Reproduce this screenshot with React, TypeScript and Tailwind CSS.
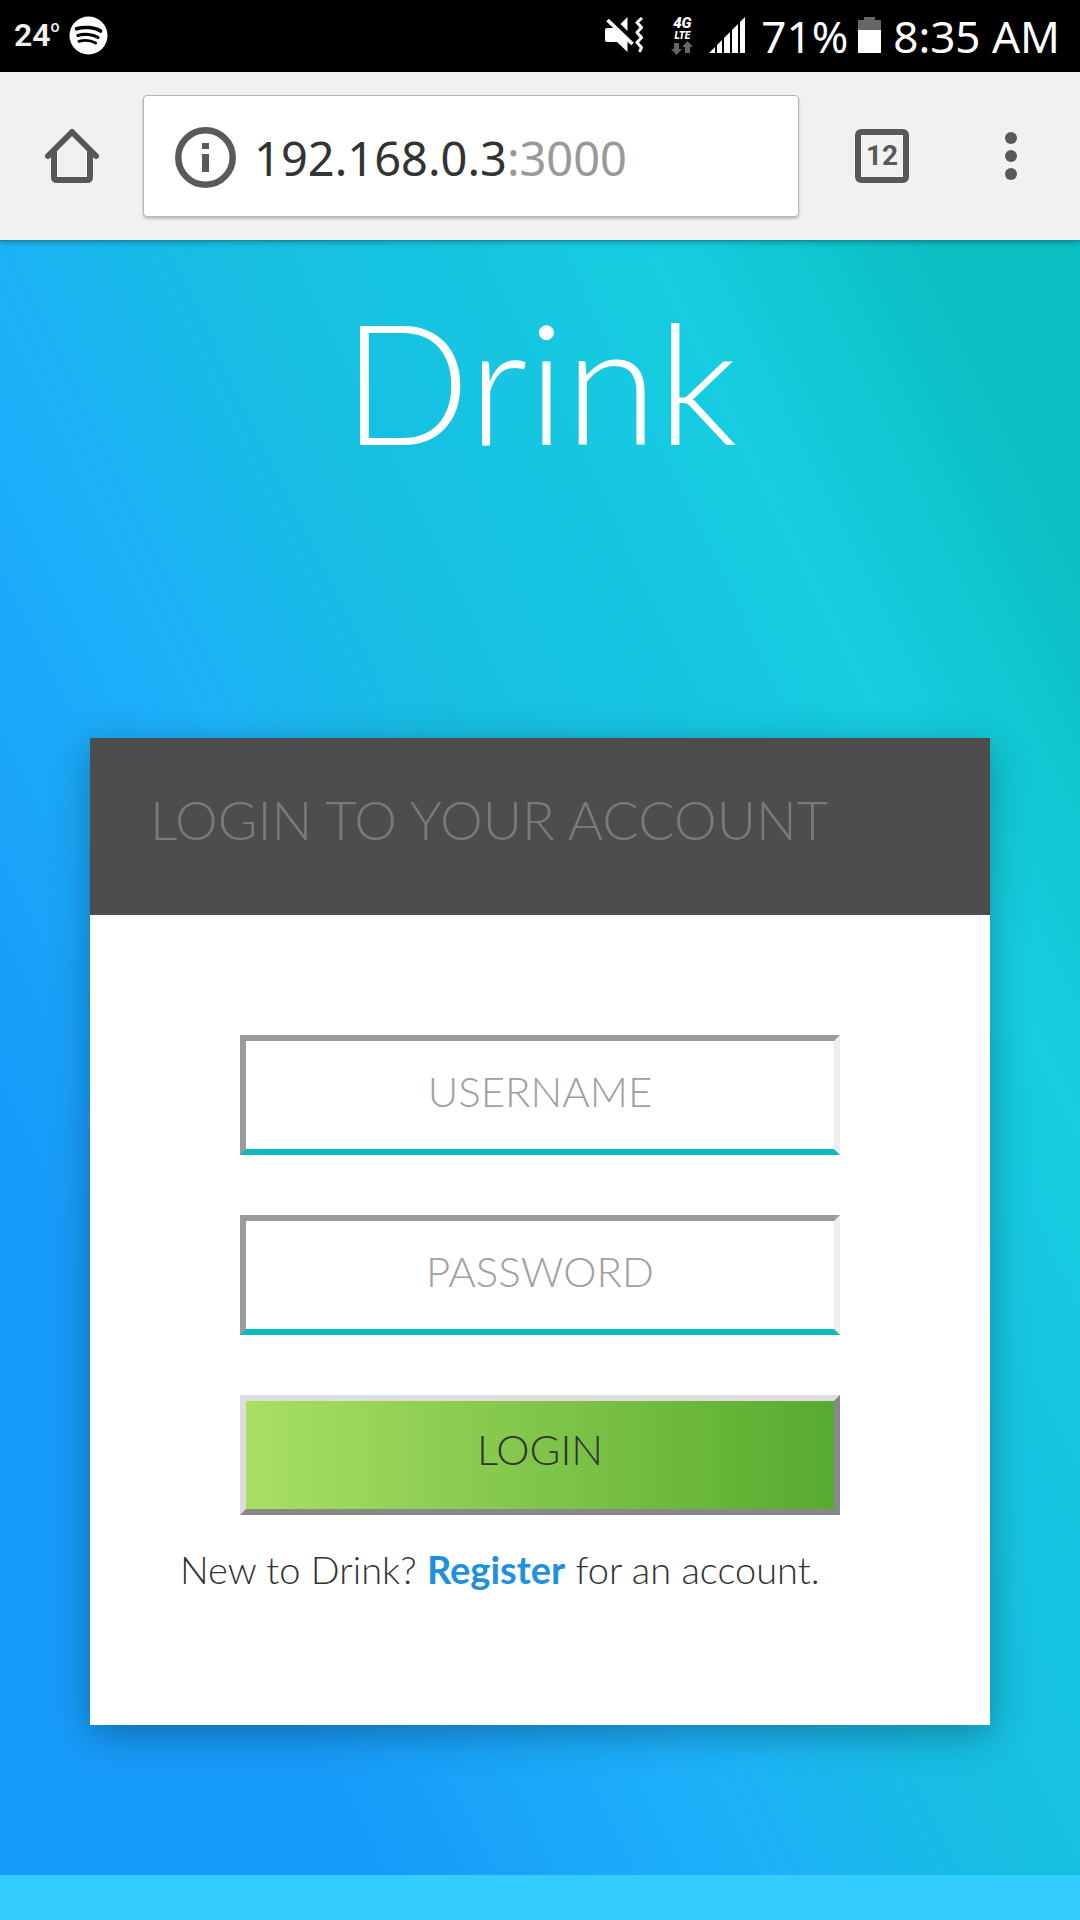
import React from "react";

function SpotifyIcon() {
  return (
    <svg className="h-[39px] w-[39px]" viewBox="0 0 39 39" fill="none" aria-label="Spotify">
      <circle cx="19.5" cy="19.5" r="19" fill="#fff" />
      <g stroke="#000" strokeLinecap="round">
        <path d="M7.5 12.8C15 10.4 25.500 11.200 31.500 15" strokeWidth="3.600" />
        <path d="M8.800 19.400C15 17.500 23.500 18.300 29 21.400" strokeWidth="3.100" />
        <path d="M9.900 25.400C15.500 23.700 22 24.500 26.700 27" strokeWidth="2.700" />
      </g>
    </svg>
  );
}

function MuteVibrateIcon() {
  return (
    <svg className="h-9 w-[38px]" viewBox="0 0 38 36" fill="none" aria-label="Muted">
      <path d="M2 11h8l12.500 12V35L12 25H2q-2 0-2-2V13q0-2 2-2Z" fill="#fff" />
      <path d="M22.500 0v14l-7-7Z" fill="#fff" />
      <path d="M2.500 3 27.500 27" stroke="#fff" strokeWidth="3.800" />
      <path d="m37 1-5 4.500 4.500 5L32 15.500l4.500 5-4.500 5 4.500 5-2 4.500" stroke="#fff" strokeWidth="3" strokeLinejoin="round" />
    </svg>
  );
}

function SignalIcon() {
  return (
    <svg className="h-9 w-9" viewBox="0 0 36 36" fill="#fff" aria-label="Signal">
      <path d="M0 36 6 30v6ZM8 28l5-5v13H8ZM15 21l6-6v21h-6ZM23 13l6-6v29h-6ZM31 5l5-5v36h-5Z" />
    </svg>
  );
}

function DataArrows() {
  return (
    <svg className="h-[14px] w-[22px]" viewBox="0 0 22 14" fill="#666" aria-hidden="true">
      <path d="M3 2h5v6h3l-5.500 6L0 8h3ZM14 12h5V6h3l-5.500-6L11 6h3Z" />
    </svg>
  );
}

function BatteryIcon() {
  return (
    <svg className="h-9 w-[23px]" viewBox="0 0 23 36" aria-label="Battery">
      <path d="M6 0h11v3h6v10H0V3h6Z" fill="#666" />
      <path d="M0 13h23v23H0Z" fill="#fff" />
    </svg>
  );
}

function StatusBar() {
  return (
    <header className="flex h-[72px] items-center bg-black pr-[20px] pl-[14px] text-white">
      <div className="flex items-center gap-[9px] pb-[2px]">
        <span className="flex items-start font-['Roboto'] text-[32px] leading-9 font-semibold text-[#f1f1f1]">
          24<sup className="top-0 text-base leading-5 font-medium">o</sup>
        </span>
        <SpotifyIcon />
      </div>
      <div className="ml-auto flex items-center">
        <div className="pb-[2px]"><MuteVibrateIcon /></div>
        <div className="ml-7 flex flex-col items-center pb-[2px] font-['Roboto'] font-black italic">
          <span className="text-[15px] leading-[15px]">4G</span>
          <span className="text-[10px] leading-[10px]">LTE</span>
          <DataArrows />
        </div>
        <div className="ml-4 pb-[2px]"><SignalIcon /></div>
        <span className="ml-4 font-['Noto_Sans'] text-[44px] leading-[60px]">71%</span>
        <div className="ml-[10px] pb-[2px]"><BatteryIcon /></div>
        <time className="ml-3 font-['Noto_Sans'] text-[44px] leading-[60px]">8:35 AM</time>
      </div>
    </header>
  );
}

function HomeIcon() {
  return (
    <svg className="h-[54px] w-[54px]" viewBox="0 0 54 54" fill="none" stroke="#585858" strokeWidth="6" aria-hidden="true">
      <path d="M3 27 27 3l24 24" strokeLinecap="round" strokeLinejoin="round" />
      <path d="M9 22v26q0 3 3 3h30q3 0 3-3V22" />
    </svg>
  );
}

function InfoIcon() {
  return (
    <svg className="h-[61px] w-[61px] shrink-0" viewBox="0 0 61 61" fill="none" aria-hidden="true">
      <circle cx="30.500" cy="30.500" r="27.200" stroke="#5a5a5a" strokeWidth="6.500" />
      <path d="M27 16h7v6h-7ZM27 27h7v18h-7Z" fill="#5a5a5a" />
    </svg>
  );
}

function BrowserBar() {
  return (
    <nav className="relative z-10 flex h-[168px] items-center bg-[#f1f1f1] pr-[63px] pl-[45px] shadow-[0_1px_0_#168aa5,0_2px_6px_rgba(0,0,0,0.3)]">
      <button aria-label="Home"><HomeIcon /></button>
      <div className="ml-11 flex h-[122px] flex-1 items-center rounded border border-[#b5b5b5] bg-white pt-[3px] pl-[31px] shadow-[0_2px_3px_rgba(0,0,0,0.2)]">
        <InfoIcon />
        <p className="ml-[18px] font-['Noto_Sans'] text-[47px] leading-[60px] text-[#333]">
          192.168.0.3<span className="text-[#999]">:3000</span>
        </p>
      </div>
      <button
        aria-label="12 open tabs"
        className="ml-14 flex h-[54px] w-[54px] items-center justify-center rounded-md border-6 border-[#585858] font-['Roboto'] text-[28px] leading-8 font-bold text-[#585858]"
      >
        12
      </button>
      <button aria-label="Menu" className="ml-24 flex flex-col gap-[6px]">
        <span className="h-3 w-3 rounded-full bg-[#585858]" />
        <span className="h-3 w-3 rounded-full bg-[#585858]" />
        <span className="h-3 w-3 rounded-full bg-[#585858]" />
      </button>
    </nav>
  );
}

function Field({ id, label, type }: { id: string; label: string; type: string }) {
  return (
    <input
      id={id}
      type={type}
      aria-label={label}
      placeholder={label}
      className="mb-15 block h-[120px] w-full border-6 border-t-[#9a9a9a] border-r-[#eee] border-b-[#0cbcbc] border-l-[#9a9a9a] bg-white pb-2 text-center text-[42px] font-light text-[#333] placeholder:text-[#a0a0a0]"
    />
  );
}

function LoginCard() {
  return (
    <section className="mx-auto w-5/6 bg-white pb-[126px] shadow-[0_9px_36px_rgba(0,0,0,0.3)]">
      <h2 className="bg-[#4d4d4d] px-[60px] pt-[48px] pb-[61px] text-[54px] leading-[68px] font-light whitespace-nowrap text-[#7a7a7a]">
        LOGIN TO YOUR ACCOUNT
      </h2>
      <form className="mx-auto w-2/3 pt-[120px]" onSubmit={(e) => e.preventDefault()}>
        <Field id="username" label="USERNAME" type="text" />
        <Field id="password" label="PASSWORD" type="password" />
        <button
          type="submit"
          className="block h-[120px] w-full border-6 border-t-[#ddd] border-r-[#888] border-b-[#888] border-l-[#ddd] bg-linear-to-r from-[#a8e063] to-[#56ab2f] bg-origin-padding pb-3 text-center text-[42px] font-light text-[#333]"
        >
          LOGIN
        </button>
      </form>
      <p className="pt-[24px] pl-[90px] text-[38px] leading-[60px] font-light whitespace-nowrap text-[#333]">
        New to Drink? <a href="#register" className="font-bold text-[#1f8fdf]">Register</a> for an account.
      </p>
    </section>
  );
}

export default function App() {
  return (
    <div className="flex min-h-screen flex-col bg-[#33ccff] font-['Lato',sans-serif]">
      <StatusBar />
      <BrowserBar />
      <main className="bg-[linear-gradient(64deg,#179bf9_20%,#1db2f9_41%,#17bde2_53%,#16cde0_78%,#0abfc2_92%)] pb-[150px]">
        <h1 className="pt-[40px] pb-[258px] text-center text-[168px] leading-[200px] font-light text-white">Drink</h1>
        <LoginCard />
      </main>
    </div>
  );
}
